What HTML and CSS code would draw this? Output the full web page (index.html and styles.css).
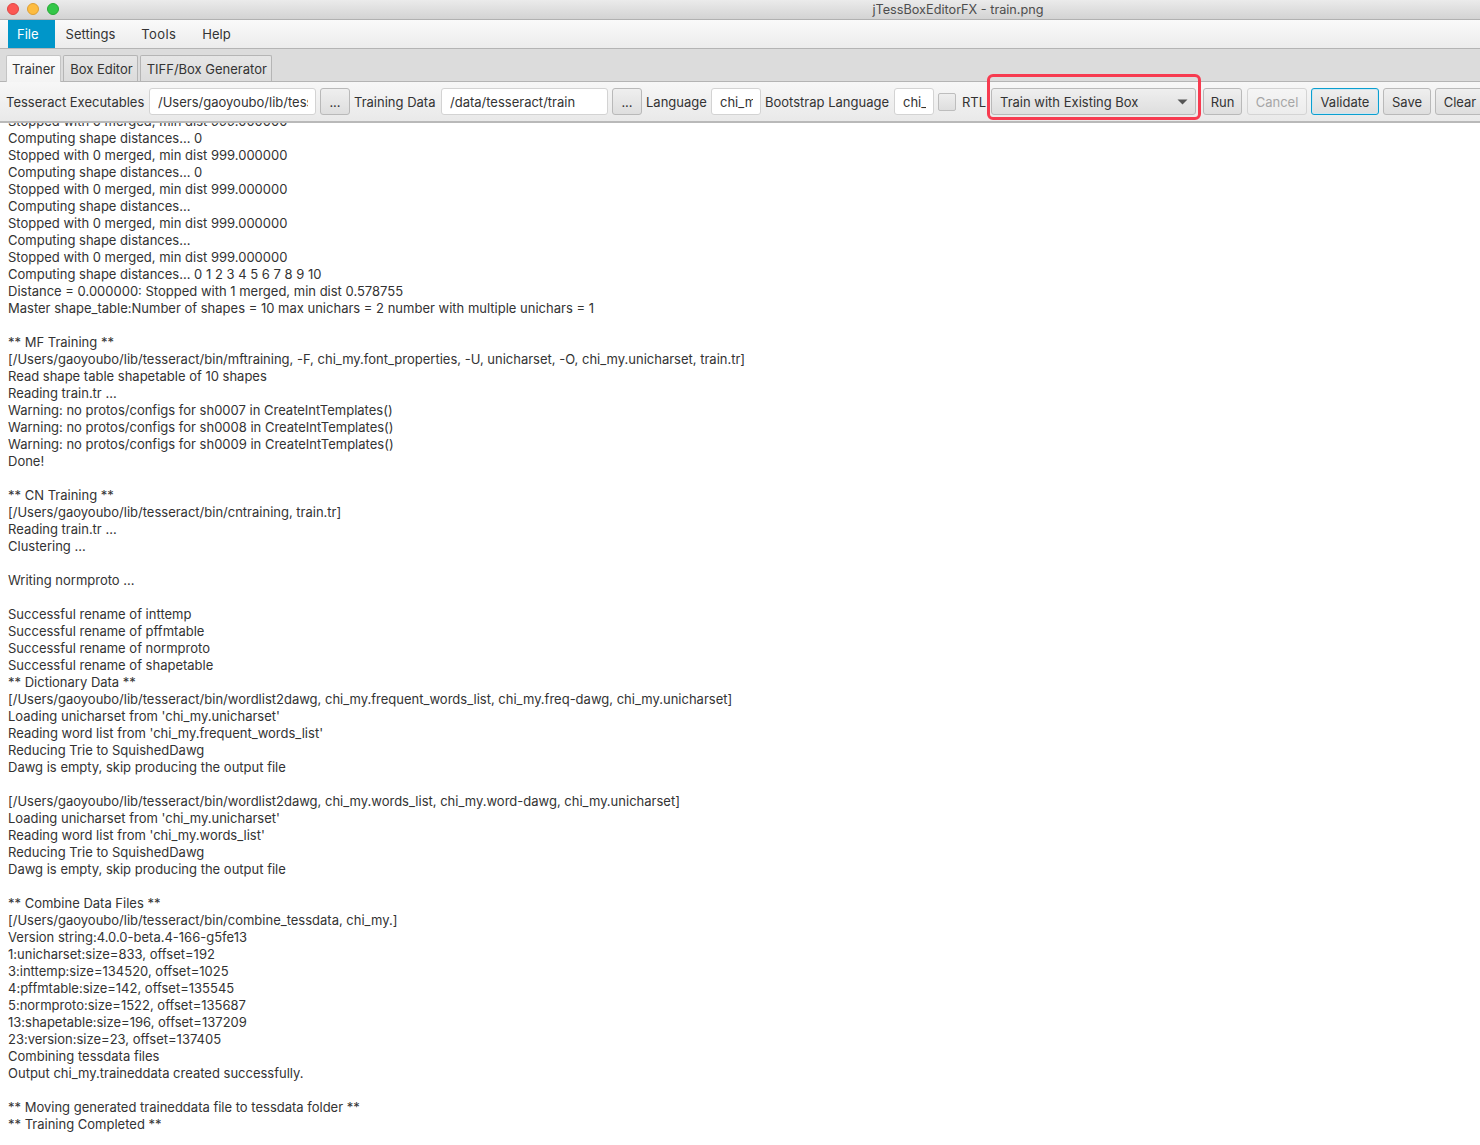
FILE: index.html
```html
<!DOCTYPE html>
<html lang="en">
<head>
<meta charset="utf-8">
<title>jTessBoxEditorFX - train.png</title>
<link rel="stylesheet" href="styles.css">
</head>
<body>
<div class="window">
  <header class="titlebar">
    <div class="lights"><span class="light red"></span><span class="light yellow"></span><span class="light green"></span></div>
    <div class="title">jTessBoxEditorFX - train.png</div>
  </header>
  <nav class="menubar">
    <span class="menu active">File</span><span class="menu">Settings</span><span class="menu tools">Tools</span><span class="menu">Help</span>
  </nav>
  <div class="tabs">
    <span class="tab selected">Trainer</span><span class="tab">Box Editor</span><span class="tab">TIFF/Box Generator</span>
  </div>
  <div class="toolbar">
    <label class="lbl l-exe">Tesseract Executables</label>
    <div class="input w-exe"><span>/Users/gaoyoubo/lib/tesseract/bin</span></div>
    <button class="btn w-dots">...</button>
    <label class="lbl l-data">Training Data</label>
    <div class="input w-exe"><span>/data/tesseract/train</span></div>
    <button class="btn w-dots">...</button>
    <label class="lbl l-lang">Language</label>
    <div class="input w-lang"><span>chi_my</span></div>
    <label class="lbl l-boot">Bootstrap Language</label>
    <div class="input w-boot"><span>chi_sim</span></div>
    <div class="check"></div>
    <label class="lbl rtl">RTL</label>
    <div class="combo"><span>Train with Existing Box</span><svg class="caret" width="11" height="6" viewBox="0 0 11 6"><path d="M0.5 0.5h10L5.5 5.5z" fill="#555"/></svg></div>
    <button class="btn run">Run</button>
    <button class="btn cancel">Cancel</button>
    <button class="btn validate">Validate</button>
    <button class="btn save">Save</button>
    <button class="btn clear">Clear</button>
    <div class="annotation"></div>
  </div>
  <div class="log"><div class="log-text">Stopped with 0 merged, min dist 999.000000
Computing shape distances... 0
Stopped with 0 merged, min dist 999.000000
Computing shape distances... 0
Stopped with 0 merged, min dist 999.000000
Computing shape distances...
Stopped with 0 merged, min dist 999.000000
Computing shape distances...
Stopped with 0 merged, min dist 999.000000
Computing shape distances... 0 1 2 3 4 5 6 7 8 9 10
Distance = 0.000000: Stopped with 1 merged, min dist 0.578755
Master shape_table:Number of shapes = 10 max unichars = 2 number with multiple unichars = 1

** MF Training **
[/Users/gaoyoubo/lib/tesseract/bin/mftraining, -F, chi_my.font_properties, -U, unicharset, -O, chi_my.unicharset, train.tr]
Read shape table shapetable of 10 shapes
Reading train.tr ...
Warning: no protos/configs for sh0007 in CreateIntTemplates()
Warning: no protos/configs for sh0008 in CreateIntTemplates()
Warning: no protos/configs for sh0009 in CreateIntTemplates()
Done!

** CN Training **
[/Users/gaoyoubo/lib/tesseract/bin/cntraining, train.tr]
Reading train.tr ...
Clustering ...

Writing normproto ...

Successful rename of inttemp
Successful rename of pffmtable
Successful rename of normproto
Successful rename of shapetable
** Dictionary Data **
[/Users/gaoyoubo/lib/tesseract/bin/wordlist2dawg, chi_my.frequent_words_list, chi_my.freq-dawg, chi_my.unicharset]
Loading unicharset from 'chi_my.unicharset'
Reading word list from 'chi_my.frequent_words_list'
Reducing Trie to SquishedDawg
Dawg is empty, skip producing the output file

[/Users/gaoyoubo/lib/tesseract/bin/wordlist2dawg, chi_my.words_list, chi_my.word-dawg, chi_my.unicharset]
Loading unicharset from 'chi_my.unicharset'
Reading word list from 'chi_my.words_list'
Reducing Trie to SquishedDawg
Dawg is empty, skip producing the output file

** Combine Data Files **
[/Users/gaoyoubo/lib/tesseract/bin/combine_tessdata, chi_my.]
Version string:4.0.0-beta.4-166-g5fe13
1:unicharset:size=833, offset=192
3:inttemp:size=134520, offset=1025
4:pffmtable:size=142, offset=135545
5:normproto:size=1522, offset=135687
13:shapetable:size=196, offset=137209
23:version:size=23, offset=137405
Combining tessdata files
Output chi_my.traineddata created successfully.

** Moving generated traineddata file to tessdata folder **
** Training Completed **</div></div>
</div>
</body>
</html>
```
FILE: styles.css
```css
* { box-sizing: border-box; }
html, body { margin: 0; padding: 0; background: #fff; }
body { font-family: Inter, "Liberation Sans", sans-serif; font-size: 13px; color: #333; }
.window { width: 1480px; height: 1145px; overflow: hidden; display: flex; flex-direction: column; }
.titlebar { height: 20px; flex: none; display: flex; align-items: center; justify-content: center; padding-left: 436px; position: relative; background: linear-gradient(#ebebeb, #d3d3d3); border-bottom: 1px solid #b1b1b1; }
.lights { position: absolute; left: 7px; top: 3px; display: flex; gap: 8px; }
.light { width: 12px; height: 12px; border-radius: 50%; }
.red { background: #fc5753; border: 1px solid #df4744; }
.yellow { background: #fdbc40; border: 1px solid #de9f34; }
.green { background: #33c748; border: 1px solid #27aa35; }
.title { color: #4d4d4d; font-size: 12.7px; }
.menubar { height: 29px; flex: none; display: flex; padding-left: 8px; background: linear-gradient(#fafafa, #ececec); border-bottom: 1px solid #b4b4b4; }
.menu { height: 28px; display: flex; align-items: center; padding: 0 9px; margin-right: 8px; color: #333; }
.menu.tools { letter-spacing: 0.4px; }
.menu.active { background: #0096c9; color: #fff; padding-right: 16px; margin-right: 2px; }
.tabs { height: 33px; flex: none; display: flex; gap: 2px; padding: 6px 0 0 6px; background: #dcdcdc; border-bottom: 1px solid #b4b4b4; }
.tab { height: 26px; padding: 0 4px 0 6px; display: flex; align-items: center; background: linear-gradient(#e6e6e6, #dcdcdc); border: 1px solid #b5b5b5; border-bottom: 0; border-radius: 2px 2px 0 0; }
.tab.selected { height: 27px; padding: 0 5px; background: linear-gradient(#fafafa, #f4f4f4); border-color: #c4c4c4; }
.toolbar { height: 41px; flex: none; position: relative; display: flex; align-items: center; gap: 4px; padding: 0 0 0 6px; background: linear-gradient(#f7f7f7, #e9e9e9); border-bottom: 2px solid #b9b9b9; white-space: nowrap; }
.lbl { flex: none; color: #333; }
.l-exe { width: 139px; }
.l-data { width: 83px; }
.l-lang { width: 61px; }
.l-boot { width: 125px; }
.rtl { width: 25px; margin-left: 2px; }
.input { flex: none; height: 27px; display: flex; align-items: center; padding: 0 7px 0 8px; background: #fff; border: 1px solid #d3d3d3; border-radius: 3px; overflow: hidden; }
.input span { display: block; width: 100%; overflow: hidden; white-space: nowrap; }
.w-exe { width: 167px; }
.w-lang { width: 50px; }
.w-boot { width: 40px; }
.btn { flex: none; height: 27px; padding: 0; font: inherit; color: #333; background: linear-gradient(#efefef, #dedede); border: 1px solid #b9b9b9; border-radius: 3px; text-align: center; }
.w-dots { width: 30px; }
.check { flex: none; width: 18px; height: 18px; background: linear-gradient(#eeeeee, #dedede); border: 1px solid #bdbdbd; border-radius: 2px; }
.combo { flex: none; width: 205px; height: 27px; display: flex; align-items: center; justify-content: space-between; padding: 0 7px 0 8px; background: linear-gradient(#efefef, #dedede); border: 1px solid #b9b9b9; border-radius: 3px; }
.caret { flex: none; }
.run { width: 39px; margin-left: 3px; }
.cancel { width: 60px; margin-left: 1px; color: #a6a6a6; background: linear-gradient(#f5f5f5, #ececec); border-color: #d4d4d4; }
.validate { width: 68px; border: 1px solid #0a9fd0; box-shadow: inset 0 0 0 1px #cfe6f0; }
.save { width: 48px; }
.clear { width: 50px; }
.annotation { position: absolute; left: 987px; top: -8px; width: 214px; height: 46px; border: 3px solid #f73b50; border-radius: 6px; pointer-events: none; }
.log { flex: 1; padding: 0 0 0 8px; overflow: hidden; background: #fff; }
.log-text { margin-top: -10px; font-size: 13px; line-height: 17px; color: #333; white-space: pre; }
```
